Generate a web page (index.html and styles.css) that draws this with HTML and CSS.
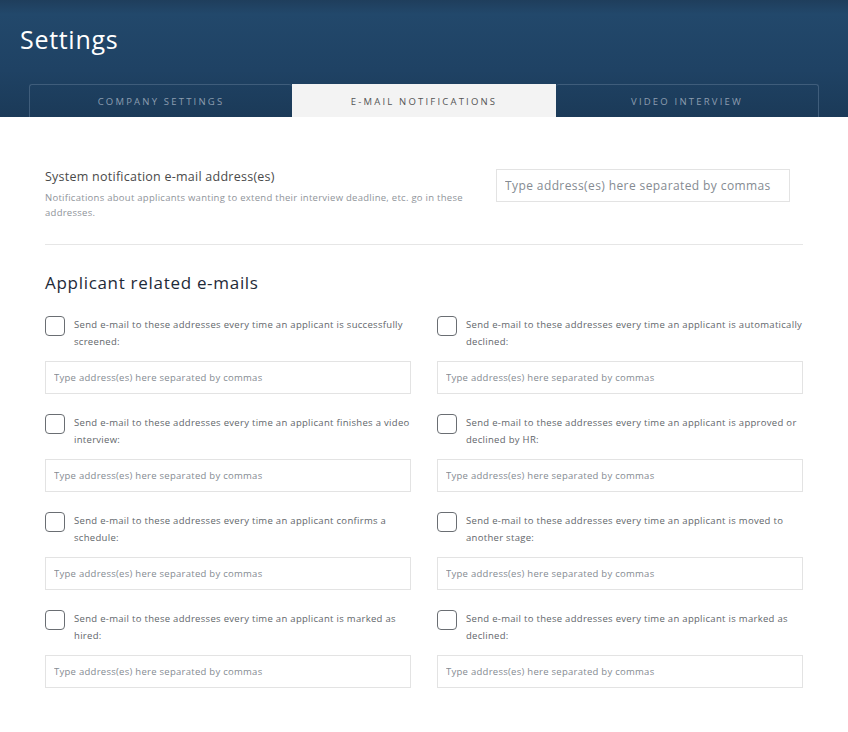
FILE: index.html
```html
<!DOCTYPE html>
<html lang="en">
<head>
    <meta charset="UTF-8">
    <meta name="viewport" content="width=device-width, initial-scale=1.0">
    <title>Settings</title>
    <link rel="stylesheet" href="styles.css">
</head>
<body>
    <div class="header">
        <h1>Settings</h1>
        <div class="tabs">
            <button class="tab">Company settings</button>
            <button class="tab active">E-mail notifications</button>
            <button class="tab">Video interview</button>
        </div>
    </div>

    <div class="content">
        <div class="system-row">
            <div class="system-text">
                <h3>System notification e-mail address(es)</h3>
                <p>Notifications about applicants wanting to extend their interview deadline, etc. go in these addresses.</p>
            </div>
            <input type="text" class="system-input" placeholder="Type address(es) here separated by commas">
        </div>

        <h2>Applicant related e-mails</h2>

        <div class="grid">
            <div class="item">
                <label class="check"><input type="checkbox"><span>Send e-mail to these addresses every time an applicant is successfully screened:</span></label>
                <input type="text" placeholder="Type address(es) here separated by commas">
            </div>
            <div class="item">
                <label class="check"><input type="checkbox"><span>Send e-mail to these addresses every time an applicant is automatically declined:</span></label>
                <input type="text" placeholder="Type address(es) here separated by commas">
            </div>
            <div class="item">
                <label class="check"><input type="checkbox"><span>Send e-mail to these addresses every time an applicant finishes a video interview:</span></label>
                <input type="text" placeholder="Type address(es) here separated by commas">
            </div>
            <div class="item">
                <label class="check"><input type="checkbox"><span>Send e-mail to these addresses every time an applicant is approved or declined by HR:</span></label>
                <input type="text" placeholder="Type address(es) here separated by commas">
            </div>
            <div class="item">
                <label class="check"><input type="checkbox"><span>Send e-mail to these addresses every time an applicant confirms a schedule:</span></label>
                <input type="text" placeholder="Type address(es) here separated by commas">
            </div>
            <div class="item">
                <label class="check"><input type="checkbox"><span>Send e-mail to these addresses every time an applicant is moved to another stage:</span></label>
                <input type="text" placeholder="Type address(es) here separated by commas">
            </div>
            <div class="item">
                <label class="check"><input type="checkbox"><span>Send e-mail to these addresses every time an applicant is marked as hired:</span></label>
                <input type="text" placeholder="Type address(es) here separated by commas">
            </div>
            <div class="item">
                <label class="check"><input type="checkbox"><span>Send e-mail to these addresses every time an applicant is marked as declined:</span></label>
                <input type="text" placeholder="Type address(es) here separated by commas">
            </div>
        </div>
    </div>
</body>
</html>
```

FILE: styles.css
```css
* {
    box-sizing: border-box;
    margin: 0;
    padding: 0;
    font-family: 'Open Sans', sans-serif;
}
body {
    background: white;
    color: #555;
}
.header {
    height: 117px;
    background: linear-gradient(to bottom, #1f3e5c 0%, #22486b 12%, #1f4264 60%, #1b3a58 100%);
    padding: 24px 29px 0 20px;
    display: flex;
    flex-direction: column;
}
.header h1 {
    color: white;
    font-size: 25px;
    font-weight: 400;
    line-height: 30px;
    letter-spacing: 0.7px;
}
.tabs {
    display: flex;
    margin-top: auto;
    margin-left: 9px;
}
.tab {
    flex: 1;
    height: 33px;
    border: 1px solid #3f5d7b;
    border-bottom: none;
    border-radius: 3px 3px 0 0;
    background: transparent;
    color: #8c9db0;
    font-size: 9.5px;
    letter-spacing: 2.2px;
    text-transform: uppercase;
    cursor: pointer;
}
.tab:first-child {
    border-right: none;
}
.tab:last-child {
    border-left: none;
}
.tab.active {
    background: #f3f3f3;
    border-color: #f3f3f3;
    border-radius: 0;
    color: #555;
}
.content {
    padding: 52px 45px 40px 45px;
}
.system-row {
    display: flex;
    justify-content: space-between;
    padding-right: 13px;
    padding-bottom: 24px;
    border-bottom: 1px solid #e6e6e6;
}
.system-text {
    width: 430px;
}
.system-text h3 {
    font-size: 12.5px;
    font-weight: 400;
    color: #4a4a4a;
    line-height: 16px;
    margin-bottom: 5px;
    letter-spacing: 0.25px;
}
.system-text p {
    font-size: 9.5px;
    color: #8f949a;
    line-height: 15px;
    letter-spacing: 0.27px;
}
.system-input {
    width: 294px;
    height: 33px;
    margin-top: 0;
    padding: 0 8px;
    font-size: 12px;
    letter-spacing: 0.4px;
}
input[type=text] {
    border: 1px solid #e3e3e3;
    color: #555;
    outline: none;
}
input[type=text]::placeholder {
    color: #858b92;
}
h2 {
    font-size: 17px;
    font-weight: 400;
    color: #1e2a38;
    margin-top: 26px;
    letter-spacing: 0.7px;
}
.grid {
    display: grid;
    grid-template-columns: 1fr 1fr;
    column-gap: 26px;
    row-gap: 20px;
    margin-top: 22px;
}
.check {
    display: flex;
    align-items: flex-start;
    gap: 9px;
    font-size: 9.5px;
    line-height: 17px;
    color: #62666b;
    min-height: 34px;
    letter-spacing: 0.3px;
}
.check input {
    appearance: none;
    flex: none;
    width: 20px;
    height: 20px;
    border: 1.5px solid #6a6e73;
    border-radius: 4px;
    background: white;
    margin-top: 0;
}
.item input[type=text] {
    display: block;
    width: 100%;
    height: 33px;
    margin-top: 11px;
    padding: 0 8px;
    font-size: 9.5px;
    letter-spacing: 0.27px;
}
```
